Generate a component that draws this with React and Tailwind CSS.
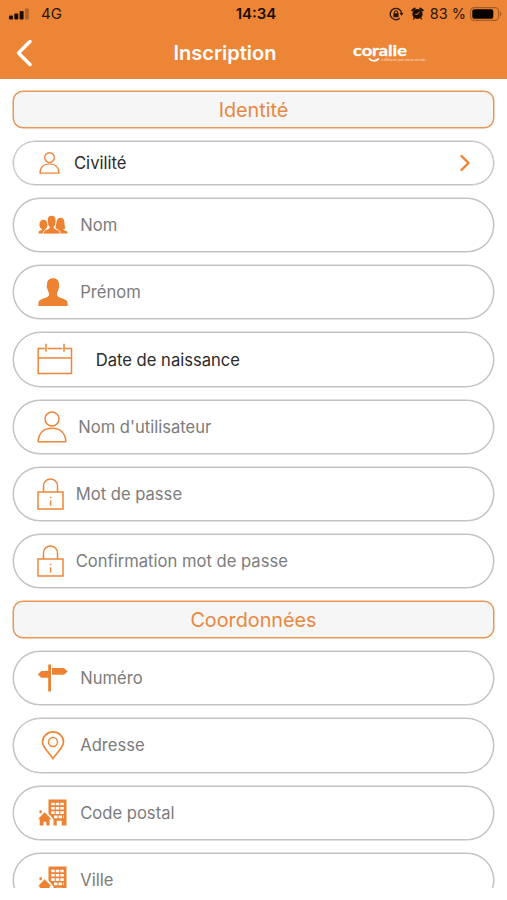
import React from 'react';

const SignalIcon = () => (
    <svg width="21" height="12" viewBox="0 0 21 12" fill="#1b0d03">
        <rect x="0" y="7.5" width="4" height="4" rx="1" />
        <rect x="5.3" y="5.5" width="4" height="6" rx="1" />
        <rect x="10.6" y="3" width="4" height="8.5" rx="1" />
        <rect x="15.9" y="0.5" width="4" height="11" rx="1" fill="#b0642b" />
    </svg>
);

const RotationLockIcon = () => (
    <svg width="15" height="14" viewBox="0 0 15 14" fill="none" stroke="#2a1507" strokeWidth="1.3">
        <path d="M10.8 11.3A5.7 5.7 0 1 1 12.6 6.2" />
        <path d="M10.5 6h4l-2 2.8z" fill="#2a1507" stroke="none" />
        <rect x="4.4" y="6.2" width="5.2" height="4" rx="0.6" fill="#2a1507" stroke="none" />
        <path d="M5.5 6.5V5.2a1.5 1.5 0 0 1 3 0v1.3" strokeWidth="1.1" />
    </svg>
);

const AlarmIcon = () => (
    <svg width="13" height="13" viewBox="0 0 13 13">
        <circle cx="6.5" cy="7" r="5.1" fill="#1b0d03" />
        <path d="M1.2 3.4L3.6 1.4M11.8 3.4L9.4 1.4" stroke="#1b0d03" strokeWidth="1.9" strokeLinecap="round" />
        <path d="M3.2 11l-.7 1M9.8 11l.7 1" stroke="#1b0d03" strokeWidth="1.3" strokeLinecap="round" />
        <path d="M8.5 4.8L6.5 7.3H4.2" stroke="#ed8536" strokeWidth="1" fill="none" />
    </svg>
);

const BatteryIcon = () => (
    <svg width="32" height="14" viewBox="0 0 32 14">
        <rect x="0.6" y="0.6" width="28" height="12.8" rx="3.6" fill="none" stroke="#a85c24" strokeWidth="1.2" />
        <rect x="2.3" y="2.3" width="21" height="9.4" rx="2" fill="#080300" />
        <path d="M30 4.8c1.8.6 1.8 3.8 0 4.4z" fill="#a85c24" />
    </svg>
);

const Logo = () => (
    <svg width="78" height="26" viewBox="0 0 78 26" fill="#fff">
        <text x="3" y="16" textLength="54" lengthAdjust="spacingAndGlyphs" className="font-['Lato',sans-serif] text-[16px] font-bold" stroke="#fff" strokeWidth="0.3">coralie</text>
        <path d="M19.5 18.8c2 2.7 6.5 2.7 8.8.2" fill="none" stroke="#fff" strokeWidth="1.9" strokeLinecap="round" />
        <text x="31" y="20.8" textLength="45" lengthAdjust="spacingAndGlyphs" opacity="0.75" className="font-['Lato',sans-serif] text-[3px]">la différence pour mieux entendre</text>
    </svg>
);

const UserIcon = ({ className, strokeWidth = 1.5 }) => (
    <svg className={className} viewBox="0 0 30 32" fill="none" stroke="#ed8639" strokeWidth={strokeWidth} strokeLinejoin="round">
        <circle cx="15" cy="8" r="7" />
        <path d="M1.2 30.8C1.2 22 7 17.3 15 17.3S28.8 22 28.8 30.8z" />
    </svg>
);

const GroupIcon = () => (
    <svg className="h-[20px] w-[30px]" viewBox="0 0 30 20" fill="#ed8232">
        <path d="M.6 18.5v-2c1.5-1 3.5-1.2 3.6-2.4C2.3 13.5 1.3 12 1.4 9.5 1.5 6.6 3.2 4.800 5.500 4.800s4 1.800 4.100 4.500c0 2-.6 3.400-1.600 4.300l-1.300 2.500-1.200 2.400z" />
        <path d="M29.400 18.500v-2c-1.800-1-3.800-1-4-2.300.8-.4 2-.4 2.300-1-1.500-1.500-.8-3.400-1.300-6C26 4.200 25 2.800 22.700 2.800S18.700 4.200 18.200 7.200c-.2 2.300-.2 4.200-.8 5.800l3 2 2 3.500z" />
        <path d="M5.300 19c-.2-2.700.8-3.700 3-4.400 2.100-.7 3.100-1.200 3.100-2.300-1.500-1.500-2.100-4.100-2.100-7.200C9.300 1.900 10.800.4 13.600.4s4.400 1.500 4.400 4.700c0 3.100-.6 5.700-2.100 7.200 0 1.100 1.100 1.600 3.200 2.300 2.200.7 3.200 1.700 3 4.400z" stroke="#fff" strokeWidth="0.8" />
    </svg>
);

const PersonIcon = () => (
    <svg className="h-[28px] w-[30px]" viewBox="0 0 30 28" fill="#ed8232">
        <path d="M15 .2c4 0 6 2.300 6 6.200 0 1 .3 1.200.3 2.300 0 1.300-.7 1.600-.9 2.800-.3 1.700-.8 2.400-1.300 3.200v2.500c.5 2.200 3.900 2.500 6.700 3.700 2.900 1.200 3.800 2.200 3.800 4.800V28H.4v-2.300c0-2.600.9-3.600 3.800-4.800 2.800-1.200 6.200-1.500 6.700-3.700v-2.500c-.5-.8-1-1.500-1.300-3.200-.2-1.200-.9-1.500-.9-2.800 0-1.100.3-1.300.3-2.300C9 2.500 11 .2 15 .2z" />
    </svg>
);

const CalendarIcon = () => (
    <svg className="h-[32px] w-[36px]" viewBox="0 0 36 32" fill="none" stroke="#ed8639" strokeWidth="1.5">
        <path d="M8 5.500H1.200V30.500H34.500V5.500H28M10.500 5.500H25.500M1 15H34.500M9 .8v8M27 .8v8" />
    </svg>
);

const LockIcon = () => (
    <svg className="h-[32px] w-[27px]" viewBox="0 0 27 32" fill="none" stroke="#ed8639" strokeWidth="1.5">
        <rect x="1" y="14" width="25" height="17" />
        <path d="M6.500 14V8a7 7 0 0 1 14 0v6M13.600 22.500v5M13.600 18.700v1.400" />
    </svg>
);

const SignpostIcon = () => (
    <svg className="h-[28px] w-[32px]" viewBox="0 0 32 28" fill="#ed8232">
        <path d="M11.200.5h2.800v27h-2.800zM11.200 7v6.800H4.300L.8 10.400 4.300 7zM15 4h11.800l4 3.400-4 3.400H15z" />
    </svg>
);

const PinIcon = () => (
    <svg className="h-[29px] w-[24px]" viewBox="0 0 24 29" fill="none" stroke="#ed8639" strokeWidth="1.7">
        <path d="M12 27.600C9 22.500 1.500 17 1.500 10.800a10.500 9.900 0 0 1 21 0C22.500 17 15 22.500 12 27.600z" />
        <circle cx="12" cy="11" r="4.500" strokeWidth="1.4" />
    </svg>
);

const CityIcon = () => (
    <svg className="h-[27px] w-[29px]" viewBox="0 0 29 27">
        <path d="M10.500.5h18v26h-4.800v-4.800h-5v4.800h-3.200v-6l-5-6z" fill="#ed8232" />
        <path d="M13.200 5h12.600M13.200 9.300h12.600M13.200 13.600h12.600M16 17.900h9.800" stroke="#fff" strokeWidth="2.6" strokeDasharray="3.5 1.05" />
        <path d="M1.500 11.300h2.200v3H1.500zM6.500 13.200l7 7h-1.900v6.300H8.300v-3.800H5.600v3.800H1.700v-6.300H0z" fill="#ed8232" />
    </svg>
);

const FIELDS = {
    identity: [
        { label: 'Nom', icon: <GroupIcon />, slot: 'pl-[23.5px] w-[66.2px]' },
        { label: 'Prénom', icon: <PersonIcon />, slot: 'pl-[23.5px] w-[66.2px]' },
        { label: 'Date de naissance', icon: <CalendarIcon />, slot: 'pl-[22.5px] w-[81.7px]', dark: true },
        { label: "Nom d'utilisateur", icon: <UserIcon className="h-[32px] w-[30px]" />, slot: 'pl-[22.5px] w-[64.2px]' },
        { label: 'Mot de passe', icon: <LockIcon />, slot: 'pl-[22.5px] w-[61.7px]' },
        { label: 'Confirmation mot de passe', icon: <LockIcon />, slot: 'pl-[22.5px] w-[61.7px]' },
    ],
    contact: [
        { label: 'Numéro', icon: <SignpostIcon />, slot: 'pl-[22.5px] w-[66.2px]' },
        { label: 'Adresse', icon: <PinIcon />, slot: 'pl-[26.5px] w-[66.2px]' },
        { label: 'Code postal', icon: <CityIcon />, slot: 'pl-[24px] w-[66.2px]' },
        { label: 'Ville', icon: <CityIcon />, slot: 'pl-[24px] w-[66.2px]' },
    ],
};

const SectionTitle = ({ children }) => (
    <h2 className="my-[0.5px] flex h-[37px] shrink-0 items-center justify-center rounded-[10px] border border-[#eb9654] bg-[#f6f6f6] pt-[2px] text-[19.8px] text-[#e8873f] shadow-[0_0_0_0.5px_#eb9654]">
        {children}
    </h2>
);

const Field = ({ label, icon, slot, dark }) => (
    <div className="my-[0.5px] flex h-[54.2px] shrink-0 items-center rounded-full border border-[#c2c2c2] bg-white shadow-[0_0_0_0.5px_#c2c2c2]">
        <div className={`flex shrink-0 ${slot}`}>{icon}</div>
        <span className={`pt-[1px] text-[16.6px] ${dark ? 'text-[#2b2b2b]' : 'text-[#7c7c7c]'}`}>{label}</span>
    </div>
);

const App = () => (
    <div className="h-[900px] w-[507px] overflow-hidden bg-white font-['Inter',sans-serif]">
        <header className="h-[79px] bg-[#ed8536] text-white">
            <div className="grid h-[27px] grid-cols-3 items-center pr-[5px] pl-[9px] text-[15px] text-[#2a1507]">
                <div className="flex items-center gap-[11px] pt-[1px]">
                    <SignalIcon />
                    <span>4G</span>
                </div>
                <span className="pt-[1px] pl-[1px] text-center text-[15px] font-semibold text-[#1b0d03]">14:34</span>
                <div className="flex items-center justify-end whitespace-nowrap">
                    <RotationLockIcon />
                    <span className="ml-[7px]"><AlarmIcon /></span>
                    <span className="mr-[4px] ml-[6px] pt-[1px] text-[14.5px]">83 %</span>
                    <BatteryIcon />
                </div>
            </div>
            <div className="grid h-[52px] grid-cols-[100px_1fr_157px] items-center">
                <svg className="mb-[1px] ml-[16px]" width="18" height="28" viewBox="0 0 18 28" fill="none" stroke="#fff" strokeWidth="3.5" strokeLinecap="round" strokeLinejoin="round">
                    <path d="M14 2.500L2.500 14 14 25.500" />
                </svg>
                <h1 className="text-center text-[20px] font-semibold">Inscription</h1>
                <span><Logo /></span>
            </div>
        </header>

        <main className="flex h-[809px] flex-col gap-[12px] overflow-hidden px-[13px] pt-[11.5px]">
            <SectionTitle>Identité</SectionTitle>
            <div className="my-[0.5px] flex h-[44px] shrink-0 items-center rounded-full border border-[#c2c2c2] shadow-[0_0_0_0.5px_#c2c2c2]">
                <UserIcon className="ml-[25px] h-[22px] w-[21px]" strokeWidth={2} />
                <span className="ml-[14px] pt-[1px] text-[16.6px] text-[#2b2b2b]">Civilité</span>
                <svg className="mr-[21px] ml-auto" width="13" height="18" viewBox="0 0 13 18" fill="none" stroke="#ed8232" strokeWidth="2.4" strokeLinecap="round" strokeLinejoin="round">
                    <path d="M2.500 2L9.500 9l-7 7" />
                </svg>
            </div>
            {FIELDS.identity.map((field) => <Field key={field.label} {...field} />)}
            <SectionTitle>Coordonnées</SectionTitle>
            {FIELDS.contact.map((field) => <Field key={field.label} {...field} />)}
        </main>
    </div>
);

export default App;
